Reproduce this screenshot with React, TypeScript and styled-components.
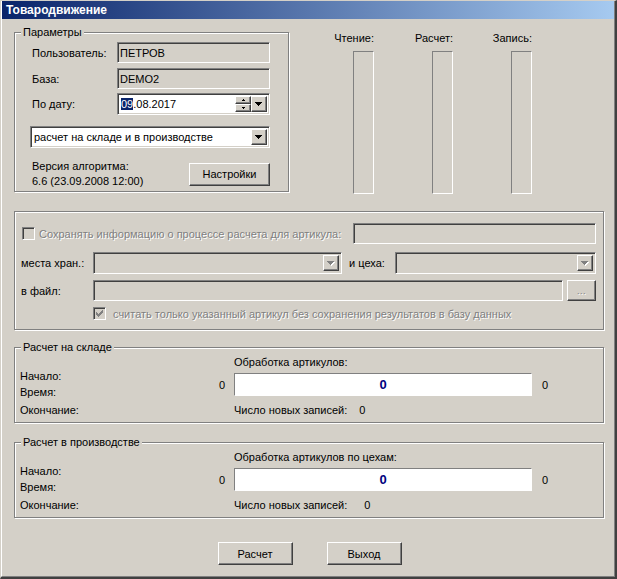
import React from "react";
import styled, { createGlobalStyle, css } from "styled-components";

const FACE = "#d4d0c8";

const Global = createGlobalStyle`
  html, body { margin: 0; padding: 0; background: ${FACE}; }
  body {
    font-family: "Liberation Sans", Arial, sans-serif;
    font-size: 11px;
    color: #000;
  }
  * { box-sizing: border-box; }
`;

const sunken = css`
  border: 1px solid;
  border-color: #808080 #fff #fff #808080;
  box-shadow: inset 1px 1px 0 #404040, inset -1px -1px 0 ${FACE};
`;

const raised = css`
  border: 1px solid;
  border-color: #fff #404040 #404040 #fff;
  box-shadow: inset -1px -1px 0 #808080, inset 1px 1px 0 ${FACE};
  background: ${FACE};
`;

const Window = styled.div`
  width: 617px;
  height: 579px;
  background: ${FACE};
  border-style: solid;
  border-width: 1px 2px 2px 1px;
  border-color: ${FACE} #404040 #404040 ${FACE};
  display: flex;
  flex-direction: column;
`;

const Frame = styled.div`
  flex: 1;
  display: flex;
  flex-direction: column;
  border-style: solid;
  border-width: 0 1px 1px 1px;
  border-color: ${FACE} #808080 #808080 #fff;
`;

const TitleBar = styled.div`
  height: 18px;
  line-height: 18px;
  padding-left: 4px;
  background: linear-gradient(to right, #0a246a, #a6caf0);
  color: #fff;
  font-weight: bold;
  font-size: 12px;
`;

const Body = styled.div`
  flex: 1;
  display: flex;
  flex-direction: column;
  padding: 13px 9px 0 12px;
`;

const TopSection = styled.div`
  display: flex;
  align-items: flex-start;
`;

const Group = styled.div<{ $w?: number; $h: number; $mt?: number }>`
  position: relative;
  flex-shrink: 0;
  width: ${(p) => (p.$w ? `${p.$w}px` : "590px")};
  height: ${(p) => p.$h}px;
  margin-top: ${(p) => p.$mt ?? 0}px;
  border: 1px solid #808080;
  box-shadow: inset 1px 1px 0 #fff, 1px 1px 0 #fff;
`;

const Legend = styled.span`
  position: absolute;
  top: -7px;
  left: 6px;
  padding: 0 2px 0 2px;
  line-height: 13px;
  background: ${FACE};
`;

/* ---------- Параметры ---------- */

const ParamsBody = styled.div`
  display: flex;
  flex-direction: column;
  padding: 9px 18px 0 15px;
`;

const ParamRow = styled.div<{ $h: number; $mt?: number }>`
  display: flex;
  align-items: center;
  height: ${(p) => p.$h}px;
  margin-top: ${(p) => p.$mt ?? 0}px;
`;

const ParamLabel = styled.span`
  width: 87px;
  padding-left: 2px;
`;

const ReadOnlyField = styled.div`
  ${sunken};
  width: 153px;
  height: 21px;
  background: ${FACE};
  padding-left: 2px;
  display: flex;
  align-items: center;
`;

const EditBox = styled.div<{ $w?: number; $disabled?: boolean }>`
  ${sunken};
  width: ${(p) => (p.$w ? `${p.$w}px` : "auto")};
  flex: ${(p) => (p.$w ? "none" : "1")};
  height: 100%;
  background: ${(p) => (p.$disabled ? FACE : "#fff")};
  display: flex;
  align-items: stretch;
  padding: 2px;
`;

const EditText = styled.span`
  flex: 1;
  display: flex;
  align-items: center;
  padding-left: 1px;
  white-space: nowrap;
  overflow: hidden;
`;

const Selected = styled.span`
  background: #0a246a;
  color: #fff;
`;

const SpinStack = styled.div`
  display: flex;
  flex-direction: column;
  width: 16px;
`;

const SpinButton = styled.div`
  ${raised};
  flex: 1;
  display: flex;
  align-items: center;
  justify-content: center;
`;

const DropButton = styled.div`
  ${raised};
  width: 16px;
  display: flex;
  align-items: center;
  justify-content: center;
`;

const VersionRow = styled.div`
  display: flex;
  align-items: center;
  justify-content: space-between;
  margin-top: 11px;
  height: 30px;
`;

const VersionText = styled.div`
  line-height: 15px;
  padding-left: 2px;
`;

const PushButton = styled.button<{ $w: number }>`
  ${raised};
  width: ${(p) => p.$w}px;
  height: 23px;
  padding: 0;
  font-family: inherit;
  font-size: 11px;
  color: #000;
`;

/* ---------- Индикаторы ---------- */

const Meters = styled.div`
  display: flex;
  gap: 39px;
  margin-left: 45px;
`;

const MeterColumn = styled.div`
  width: 40px;
  display: flex;
  flex-direction: column;
  align-items: flex-end;
`;

const MeterLabel = styled.span`
  line-height: 13px;
  white-space: nowrap;
`;

const MeterBar = styled.div`
  width: 21px;
  height: 143px;
  margin-top: 6px;
  border: 1px solid;
  border-color: #808080 #fff #fff #808080;
`;

/* ---------- Опции ---------- */

const OptionsBody = styled.div`
  display: flex;
  flex-direction: column;
  padding: 11px 7px 0 6px;
`;

const OptRow = styled.div<{ $h: number; $mt?: number; $indent?: number }>`
  display: flex;
  align-items: center;
  height: ${(p) => p.$h}px;
  margin-top: ${(p) => p.$mt ?? 0}px;
  padding-left: ${(p) => p.$indent ?? 0}px;
`;

const OptLabel = styled.span<{ $w: number; $ml?: number }>`
  width: ${(p) => p.$w}px;
  margin-left: ${(p) => p.$ml ?? 0}px;
  flex-shrink: 0;
`;

const DisabledText = styled.span<{ $ml?: number }>`
  margin-left: ${(p) => p.$ml ?? 0}px;
  color: #808080;
  text-shadow: 1px 1px 0 #fff;
  white-space: nowrap;
`;

const CheckBox = styled.span<{ $ml?: number }>`
  ${sunken};
  width: 13px;
  height: 13px;
  margin-left: ${(p) => p.$ml ?? 0}px;
  background: ${FACE};
  display: flex;
  align-items: center;
  justify-content: center;
  flex-shrink: 0;
`;

const FieldSlot = styled.div<{ $w?: number; $ml?: number }>`
  height: 100%;
  display: flex;
  width: ${(p) => (p.$w ? `${p.$w}px` : "auto")};
  flex: ${(p) => (p.$w ? "none" : "1")};
  margin-left: ${(p) => (p.$ml === undefined ? "auto" : `${p.$ml}px`)};
`;

const DotsButton = styled.div`
  ${raised};
  width: 29px;
  height: 21px;
  margin-left: 4px;
  display: flex;
  align-items: center;
  justify-content: center;
  color: #808080;
  text-shadow: 1px 1px 0 #fff;
  font-size: 9px;
  letter-spacing: 0.5px;
`;

/* ---------- Расчет ---------- */

const CalcBody = styled.div`
  display: flex;
  align-items: flex-start;
  padding-left: 5px;
`;

const CalcLabels = styled.div`
  width: 194px;
  padding-top: 20px;
  display: flex;
  flex-direction: column;
`;

const CalcLabel = styled.span<{ $mt?: number }>`
  line-height: 16px;
  margin-top: ${(p) => p.$mt ?? 0}px;
`;

const ZeroColumn = styled.div`
  width: 20px;
  padding-top: 30px;
  padding-right: 9px;
  line-height: 14px;
  text-align: right;
`;

const CalcMain = styled.div`
  display: flex;
  flex-direction: column;
  padding-top: 7px;
`;

const CalcLine = styled.div<{ $mt?: number }>`
  display: flex;
  align-items: center;
  line-height: 14px;
  margin-top: ${(p) => p.$mt ?? 0}px;
`;

const Progress = styled.div`
  width: 298px;
  height: 23px;
  background: #fff;
  border: 1px solid;
  border-color: #808080 #fff #fff #808080;
  display: flex;
  align-items: center;
  justify-content: center;
  color: #000080;
  font-family: "Liberation Sans Narrow", "Liberation Sans", Arial, sans-serif;
  font-weight: bold;
  font-size: 13px;
`;

const Value = styled.span<{ $ml: number }>`
  margin-left: ${(p) => p.$ml}px;
`;

/* ---------- Кнопки ---------- */

const ButtonRow = styled.div`
  display: flex;
  justify-content: center;
  gap: 34px;
  margin-top: 24px;
`;

/* ---------- Glyphs ---------- */

const DownArrow = ({ disabled }: { disabled?: boolean }) => {
  const rows = [
    [0, 7],
    [1, 5],
    [2, 3],
    [3, 1],
  ];
  return (
    <svg width="8" height="5" viewBox="0 0 8 5" shapeRendering="crispEdges">
      {disabled &&
        rows.map(([o, w], i) => (
          <rect key={`s${i}`} x={o + 1} y={i + 1} width={w} height={1} fill="#fff" />
        ))}
      {rows.map(([o, w], i) => (
        <rect key={i} x={o} y={i} width={w} height={1} fill={disabled ? "#808080" : "#000"} />
      ))}
    </svg>
  );
};

const SpinArrow = ({ up }: { up?: boolean }) => (
  <svg width="3" height="2" viewBox="0 0 3 2" shapeRendering="crispEdges">
    <rect x={up ? 1 : 0} y={0} width={up ? 1 : 3} height={1} fill="#000" />
    <rect x={up ? 0 : 1} y={1} width={up ? 3 : 1} height={1} fill="#000" />
  </svg>
);

const CheckMark = () => {
  const cols = [2, 3, 4, 3, 2, 1, 0];
  return (
    <svg width="7" height="7" viewBox="0 0 7 7" shapeRendering="crispEdges">
      {cols.map((y, x) => (
        <rect key={x} x={x} y={y} width={1} height={3} fill="#808080" />
      ))}
    </svg>
  );
};

const Combo = ({
  text,
  w,
  disabled,
}: {
  text?: string;
  w?: number;
  disabled?: boolean;
}) => (
  <EditBox $w={w} $disabled={disabled}>
    <EditText>{text}</EditText>
    <DropButton>
      <DownArrow disabled={disabled} />
    </DropButton>
  </EditBox>
);

const CalcGroup = ({
  title,
  header,
  recordsOffset,
  mt,
}: {
  title: string;
  header: string;
  recordsOffset: number;
  mt: number;
}) => (
  <Group $h={76} $mt={mt}>
    <Legend>{title}</Legend>
    <CalcBody>
      <CalcLabels>
        <CalcLabel>Начало:</CalcLabel>
        <CalcLabel>Время:</CalcLabel>
        <CalcLabel $mt={2}>Окончание:</CalcLabel>
      </CalcLabels>
      <ZeroColumn>0</ZeroColumn>
      <CalcMain>
        <CalcLine>{header}</CalcLine>
        <CalcLine $mt={4}>
          <Progress>0</Progress>
          <Value $ml={10}>0</Value>
        </CalcLine>
        <CalcLine $mt={7}>
          <span>Число новых записей:</span>
          <Value $ml={recordsOffset}>0</Value>
        </CalcLine>
      </CalcMain>
    </CalcBody>
  </Group>
);

export default function App() {
  return (
    <>
      <Global />
      <Window>
        <Frame>
          <TitleBar>Товародвижение</TitleBar>
          <Body>
            <TopSection>
              <Group $w={275} $h={160}>
                <Legend>Параметры</Legend>
                <ParamsBody>
                  <ParamRow $h={21}>
                    <ParamLabel>Пользователь:</ParamLabel>
                    <ReadOnlyField>ПЕТРОВ</ReadOnlyField>
                  </ParamRow>
                  <ParamRow $h={21} $mt={5}>
                    <ParamLabel>База:</ParamLabel>
                    <ReadOnlyField>DEMO2</ReadOnlyField>
                  </ParamRow>
                  <ParamRow $h={22} $mt={4}>
                    <ParamLabel>По дату:</ParamLabel>
                    <EditBox $w={153}>
                      <EditText>
                        <Selected>09</Selected>.08.2017
                      </EditText>
                      <SpinStack>
                        <SpinButton>
                          <SpinArrow up />
                        </SpinButton>
                        <SpinButton>
                          <SpinArrow />
                        </SpinButton>
                      </SpinStack>
                      <DropButton>
                        <DownArrow />
                      </DropButton>
                    </EditBox>
                  </ParamRow>
                  <ParamRow $h={22} $mt={11}>
                    <Combo text="расчет на складе и в производстве" w={240} />
                  </ParamRow>
                  <VersionRow>
                    <VersionText>
                      Версия алгоритма:
                      <br />
                      6.6 (23.09.2008 12:00)
                    </VersionText>
                    <PushButton $w={81}>Настройки</PushButton>
                  </VersionRow>
                </ParamsBody>
              </Group>
              <Meters>
                <MeterColumn>
                  <MeterLabel>Чтение:</MeterLabel>
                  <MeterBar />
                </MeterColumn>
                <MeterColumn>
                  <MeterLabel>Расчет:</MeterLabel>
                  <MeterBar />
                </MeterColumn>
                <MeterColumn>
                  <MeterLabel>Запись:</MeterLabel>
                  <MeterBar />
                </MeterColumn>
              </Meters>
            </TopSection>

            <Group $h={119} $mt={17}>
              <OptionsBody>
                <OptRow $h={21}>
                  <CheckBox $ml={1} />
                  <DisabledText $ml={4}>
                    Сохранять информацию о процессе расчета для артикула:
                  </DisabledText>
                  <FieldSlot $w={243}>
                    <EditBox $disabled />
                  </FieldSlot>
                </OptRow>
                <OptRow $h={22} $mt={8}>
                  <OptLabel $w={72}>места хран.:</OptLabel>
                  <FieldSlot $w={249} $ml={0}>
                    <Combo disabled />
                  </FieldSlot>
                  <OptLabel $w={46} $ml={7}>
                    и цеха:
                  </OptLabel>
                  <FieldSlot $ml={0}>
                    <Combo disabled />
                  </FieldSlot>
                </OptRow>
                <OptRow $h={21} $mt={6}>
                  <OptLabel $w={72}>в файл:</OptLabel>
                  <FieldSlot $ml={0}>
                    <EditBox $disabled />
                  </FieldSlot>
                  <DotsButton>...</DotsButton>
                </OptRow>
                <OptRow $h={13} $mt={6} $indent={72}>
                  <CheckBox>
                    <CheckMark />
                  </CheckBox>
                  <DisabledText $ml={7}>
                    считать только указанный артикул без сохранения результатов в базу данных
                  </DisabledText>
                </OptRow>
              </OptionsBody>
            </Group>

            <CalcGroup
              title="Расчет на складе"
              header="Обработка артикулов:"
              recordsOffset={12}
              mt={17}
            />
            <CalcGroup
              title="Расчет в производстве"
              header="Обработка артикулов по цехам:"
              recordsOffset={17}
              mt={19}
            />

            <ButtonRow>
              <PushButton $w={75}>Расчет</PushButton>
              <PushButton $w={75}>Выход</PushButton>
            </ButtonRow>
          </Body>
        </Frame>
      </Window>
    </>
  );
}
